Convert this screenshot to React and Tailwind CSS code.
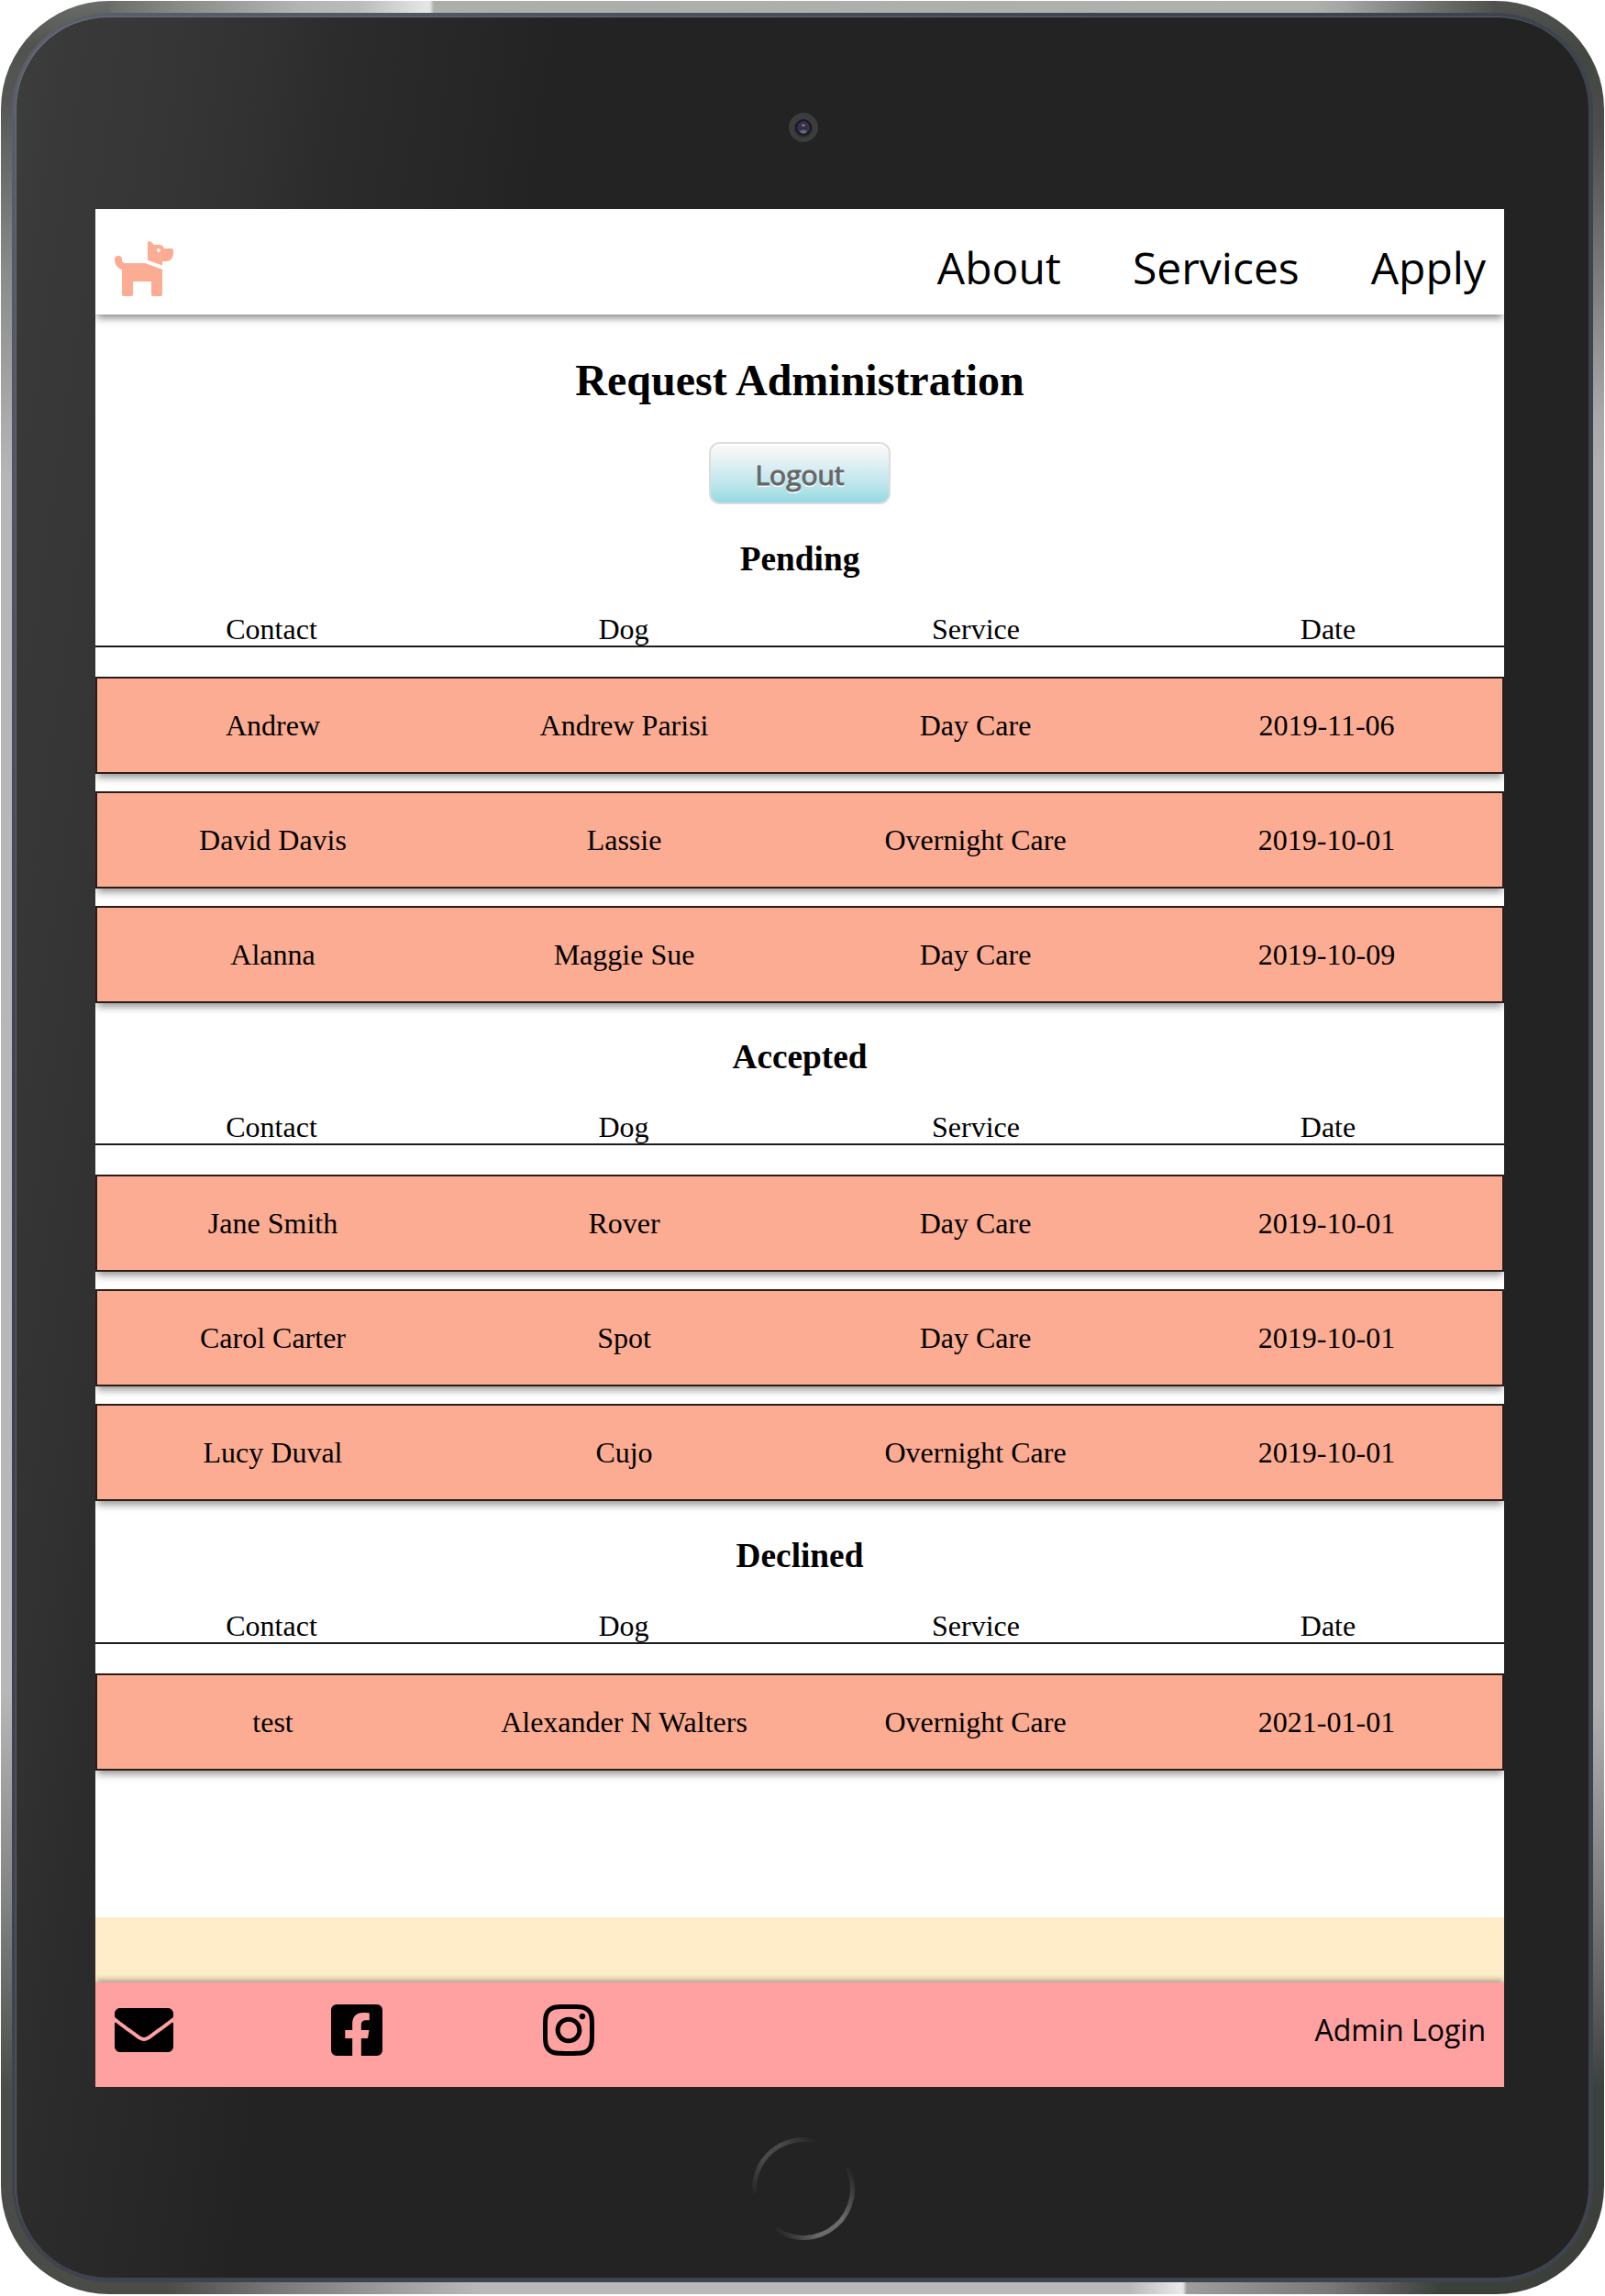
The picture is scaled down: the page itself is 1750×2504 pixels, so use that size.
import { FaDog, FaEnvelope, FaFacebookSquare, FaInstagram } from "react-icons/fa";

const METAL = [
  "linear-gradient(90deg,#6b6d6a 0px,#8a8c89 80px,#b5b5b5 210px,#bababa 270px,#e6e6e6 345px,#e2e2e2 349px,#abaeaa 353px,#aeb1ad 1310px,#a5a5a5 1345px,#707270 1440px,#4f524e 1508px) 119px 0 / 1508px 20px no-repeat",
  "linear-gradient(90deg,#4a4c48 0px,#4a4c48 60px,#777877 180px,#b8b8b8 400px,#b8b8b8 1110px,#e8e8e8 1167px,#e4e4e4 1170px,#9b9e9a 1174px,#777977 1330px,#3c403b 1450px,#3c403b 1508px) 119px 100% / 1508px 20px no-repeat",
  "linear-gradient(180deg,#6b6d6a 0px,#4f524d 50px,#555754 110px,#8a8d8a 300px,#b6b6b6 520px,#b8b8b8 1840px,#858784 2060px,#4a4c48 2280px,#4a4c48 2504px) 0 0 / 874px 100% no-repeat",
  "linear-gradient(180deg,#4f524e 0px,#434742 60px,#4a4d49 140px,#5c5e5b 200px,#a8a8a8 450px,#aeb1ad 510px,#aeb1ad 1850px,#a8a8a8 1890px,#777977 2080px,#3c403b 2280px,#3c403b 2504px) 100% 0 / 874px 100% no-repeat",
].join(",");

const RING = "linear-gradient(135deg,#5c606b 0px,#4f535d 420px,#3e434d 850px)";

const GLASS =
  "linear-gradient(98.25deg,#3c3e3d 0px,#393939 60px,#363636 170px,#313131 280px,#2c2c2c 350px,#292929 430px,#262626 520px,#232323 590px)";

const sections = [
  {
    title: "Pending",
    rows: [
      ["Andrew", "Andrew Parisi", "Day Care", "2019-11-06"],
      ["David Davis", "Lassie", "Overnight Care", "2019-10-01"],
      ["Alanna", "Maggie Sue", "Day Care", "2019-10-09"],
    ],
  },
  {
    title: "Accepted",
    rows: [
      ["Jane Smith", "Rover", "Day Care", "2019-10-01"],
      ["Carol Carter", "Spot", "Day Care", "2019-10-01"],
      ["Lucy Duval", "Cujo", "Overnight Care", "2019-10-01"],
    ],
  },
  {
    title: "Declined",
    rows: [["test", "Alexander N Walters", "Overnight Care", "2021-01-01"]],
  },
];

function Section({ title, rows }) {
  return (
    <section>
      <h2 className="text-center text-[37.3px] leading-[42px] font-bold">{title}</h2>
      <div className="mt-[32px] grid h-[43px] grid-cols-4 border-b-2 border-[#1c1c1c] text-center text-[32px] leading-[46px]">
        <span>Contact</span>
        <span>Dog</span>
        <span>Service</span>
        <span>Date</span>
      </div>
      <div className="mt-[32px] flex flex-col gap-[19px]">
        {rows.map((r, i) => (
          <div
            key={i}
            className="grid h-[106px] grid-cols-4 items-center border-2 border-[#2a1d18] bg-[#fcac92] text-center text-[32px] shadow-[0_6px_8px_-2px_rgba(0,0,0,0.42)]"
          >
            {r.map((c, j) => (
              <span key={j}>{c}</span>
            ))}
          </div>
        ))}
      </div>
    </section>
  );
}

function Camera() {
  return (
    <svg className="h-[32px] w-[32px]" viewBox="0 0 32 32">
      <circle cx="16" cy="16" r="16" fill="#3b3d3c" />
      <circle cx="16" cy="17" r="10" fill="#2c2d2d" />
      <circle cx="16" cy="16" r="9" fill="#1b1b1c" />
      <circle cx="16" cy="16" r="6.8" fill="#3d2d56" />
      <circle cx="16" cy="16" r="3.8" fill="#30313a" />
      <ellipse cx="16" cy="13.7" rx="2" ry="1.1" fill="#85858c" />
      <ellipse cx="16" cy="20.6" rx="3.6" ry="2" fill="#62667a" />
    </svg>
  );
}

function HomeButton() {
  return (
    <svg className="h-[112px] w-[112px]" viewBox="-56 -56 112 112" fill="none" strokeWidth="5">
      <defs>
        <linearGradient id="arcA" gradientUnits="userSpaceOnUse" x1="-53" y1="6" x2="14" y2="-52">
          <stop offset="0" stopColor="#474a48" stopOpacity="0.1" />
          <stop offset="0.35" stopColor="#474a48" />
          <stop offset="0.65" stopColor="#474a48" />
          <stop offset="1" stopColor="#474a48" stopOpacity="0" />
        </linearGradient>
        <linearGradient id="arcB" gradientUnits="userSpaceOnUse" x1="48" y1="-24" x2="-31" y2="44">
          <stop offset="0" stopColor="#6b6b6b" stopOpacity="0.05" />
          <stop offset="0.4" stopColor="#6b6b6b" />
          <stop offset="0.7" stopColor="#6b6b6b" />
          <stop offset="1" stopColor="#6b6b6b" stopOpacity="0.05" />
        </linearGradient>
      </defs>
      <path d="M-53.3 5A53.5 53.5 0 0 1 13 -51.9" stroke="url(#arcA)" />
      <path d="M47.8 -24A53.5 53.5 0 0 1 -30.5 44" stroke="url(#arcB)" />
    </svg>
  );
}

export default function App() {
  return (
    <div className="h-[2504px] w-[1750px] bg-white p-px font-['Liberation_Serif',serif] text-black">
      <div className="h-[2501px] w-[1748px] rounded-[118px] px-[12px] py-[13px]" style={{ background: METAL }}>
        <div className="h-[2475px] w-[1724px] rounded-[106px] p-[5px]" style={{ background: RING }}>
          <div
            className="flex h-[2465px] w-[1714px] flex-col rounded-[100px] shadow-[-1px_-1px_1px_rgba(125,128,138,0.5)]"
            style={{ background: GLASS }}
          >
            <div className="flex h-[209px] shrink-0 justify-center pt-[104px] pl-[2px]">
              <Camera />
            </div>
            <div className="ml-[86px] flex h-[2048px] w-[1536px] shrink-0 flex-col overflow-hidden bg-white">
              <header className="flex h-[115px] shrink-0 items-start justify-between pt-[30px] pr-[20px] pl-[17px] font-['Open_Sans',sans-serif] shadow-[0_6px_8px_-2px_rgba(0,0,0,0.45)]">
                <FaDog className="mt-px h-[64px] w-[72px] text-[#fcac92]" />
                <nav className="flex gap-[78px] text-[48px] leading-[68px]">
                  <a>About</a>
                  <a>Services</a>
                  <a>Apply</a>
                </nav>
              </header>
              <main className="flex-1">
                <h1 className="mt-[42px] text-center text-[48px] leading-[60px] font-bold">Request Administration</h1>
                <button className="mx-auto mt-[37px] block h-[68px] w-[198px] rounded-[12px] border-2 border-[#dcdcdc] bg-[linear-gradient(180deg,#f9f9f9_0%,#f4f6f6_12%,#cfebf0_50%,#b3e3e8_78%,#93d9e3_100%)] pt-[3px] font-['Open_Sans',sans-serif] text-[30px] text-[#666] shadow-[inset_0_2px_0_#fff] [-webkit-text-stroke:1px_#666] [text-shadow:0_2px_0_#fff]">
                  Logout
                </button>
                <div className="mt-[39px] flex flex-col gap-[38.4px]">
                  {sections.map((s) => (
                    <Section key={s.title} {...s} />
                  ))}
                </div>
              </main>
              <div className="h-[71px] shrink-0 bg-[#ffecc8]" />
              <footer className="flex h-[114px] shrink-0 items-center bg-[#ffa0a1] pr-[20px] pb-[11px] pl-[21px] shadow-[0_-3px_7px_-1px_rgba(0,0,0,0.4)]">
                <FaEnvelope className="mr-[168px] text-[64px]" />
                <FaFacebookSquare className="mr-[167px] text-[64px]" />
                <FaInstagram className="text-[64px]" />
                <a className="ml-auto font-['Open_Sans',sans-serif] text-[32px]">Admin Login</a>
              </footer>
            </div>
            <div className="flex flex-1 justify-center pt-[55px] pl-[2px]">
              <HomeButton />
            </div>
          </div>
        </div>
      </div>
    </div>
  );
}
